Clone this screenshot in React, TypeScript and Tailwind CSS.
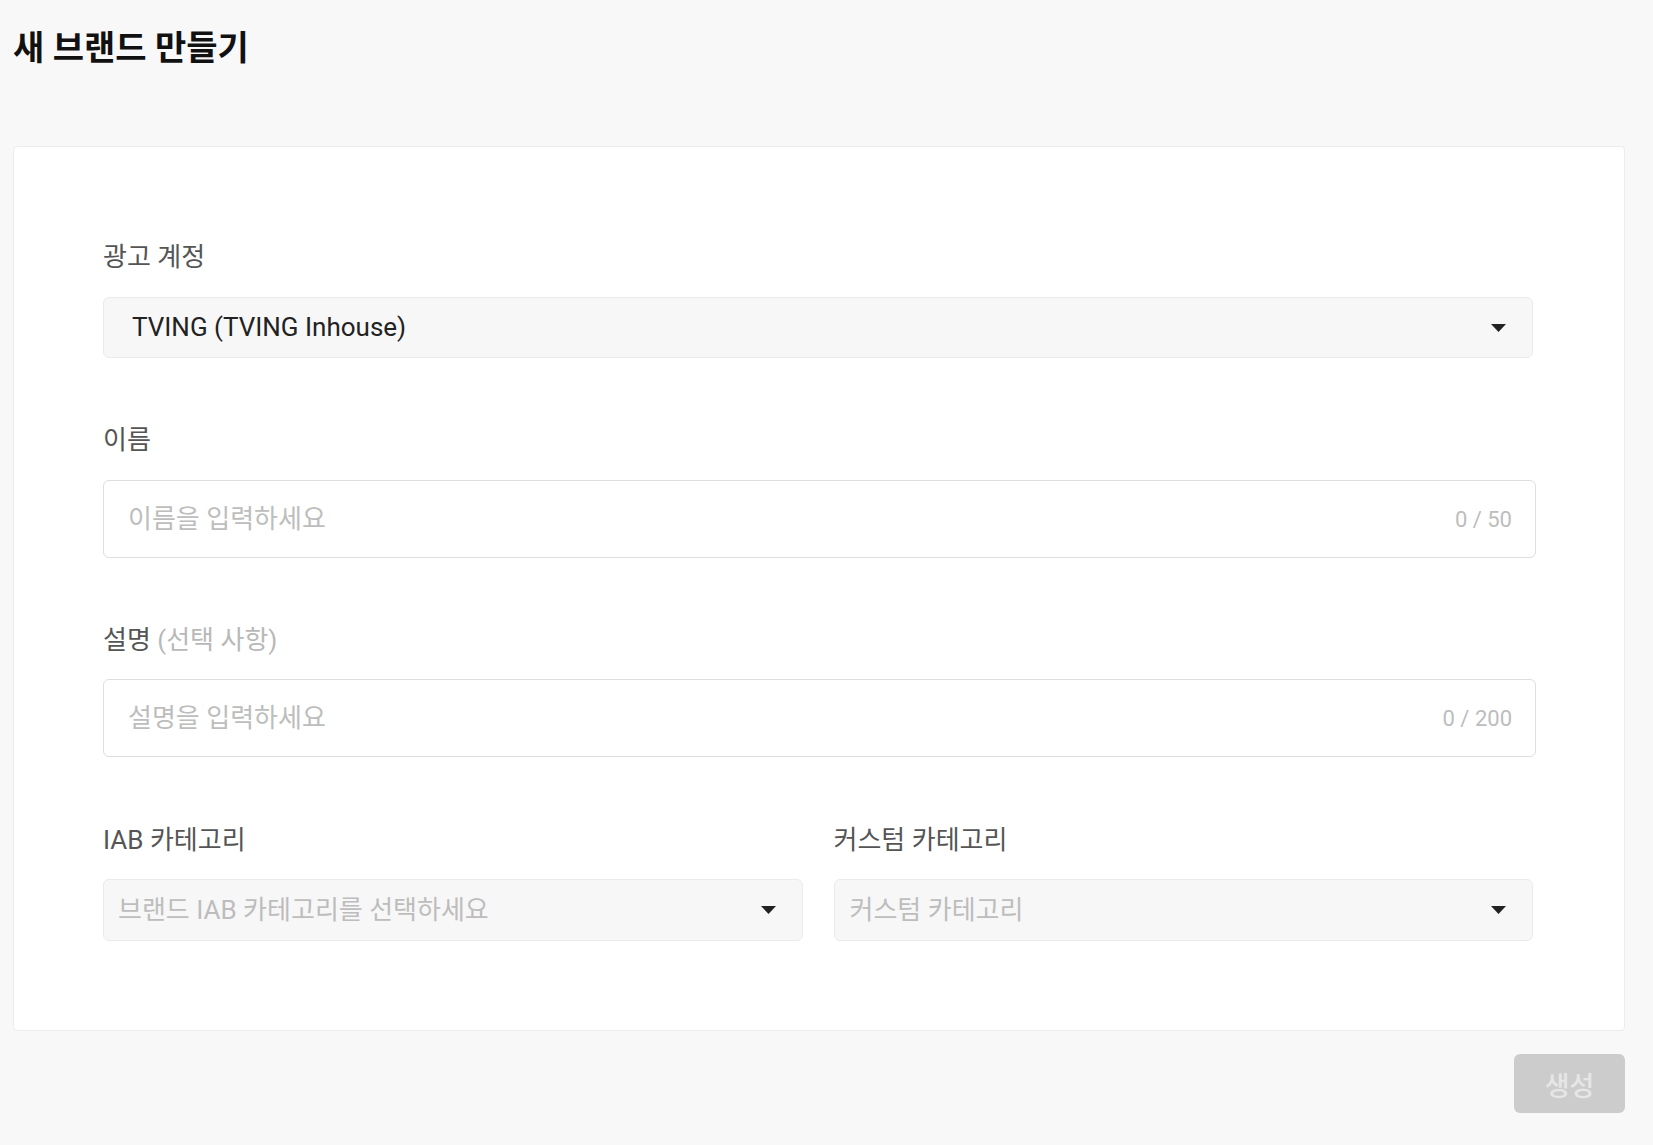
import { useState } from 'react'

function Caret() {
  return (
    <svg width="15" height="8" viewBox="0 0 15 8" className="shrink-0">
      <path d="M0 0 L15 0 L7.5 8 Z" fill="#222" />
    </svg>
  )
}

function Label({ children }: { children: React.ReactNode }) {
  return <div className="text-[26px] leading-[36px] text-[#555]">{children}</div>
}

export default function App() {
  const [name, setName] = useState('')
  const [desc, setDesc] = useState('')

  return (
    <div
      className="min-h-screen bg-[#f8f8f8] pl-[13px] pr-[28px] pt-[24px] pb-[32px]"
      style={{ fontFamily: "Roboto, 'Noto Sans CJK KR', sans-serif" }}
    >
      <h1 className="text-[34px] leading-[48px] font-bold text-[#111]">새 브랜드 만들기</h1>

      <div className="mt-[74px] bg-white border border-[#ececec] rounded-[4px] pl-[89px] pr-[88px] pt-[92px] pb-[89px]">
        <Label>광고 계정</Label>
        <div className="mt-[22px] mr-[3px] h-[61px] flex items-center justify-between bg-[#f7f7f7] border border-[#ebebeb] rounded-[6px] pl-[28px] pr-[26px]">
          <span className="text-[26px] text-[#222]">TVING (TVING Inhouse)</span>
          <Caret />
        </div>

        <div className="mt-[64px]">
          <Label>이름</Label>
        </div>
        <div className="mt-[22px] h-[78px] flex items-center bg-white border border-[#dedede] rounded-[6px] pl-[24px] pr-[23px]">
          <input
            value={name}
            onChange={e => setName(e.target.value.slice(0, 50))}
            placeholder="이름을 입력하세요"
            className="flex-1 bg-transparent outline-none text-[26px] text-[#222] placeholder:text-[#bdbdbd]"
          />
          <span className="text-[22px] text-[#bdbdbd]">{name.length} / 50</span>
        </div>

        <div className="mt-[64px]">
          <Label>
            설명 <span className="text-[#b8b8b8]">(선택 사항)</span>
          </Label>
        </div>
        <div className="mt-[21px] h-[78px] flex items-center bg-white border border-[#dedede] rounded-[6px] pl-[24px] pr-[23px]">
          <input
            value={desc}
            onChange={e => setDesc(e.target.value.slice(0, 200))}
            placeholder="설명을 입력하세요"
            className="flex-1 bg-transparent outline-none text-[26px] text-[#222] placeholder:text-[#bdbdbd]"
          />
          <span className="text-[22px] text-[#bdbdbd]">{desc.length} / 200</span>
        </div>

        <div className="mt-[65px] mr-[3px] grid grid-cols-2 gap-x-[31px]">
          <div>
            <Label>IAB 카테고리</Label>
            <div className="mt-[21px] h-[62px] flex items-center justify-between bg-[#f7f7f7] border border-[#ebebeb] rounded-[6px] pl-[14px] pr-[26px]">
              <span className="text-[26px] text-[#bdbdbd]">브랜드 IAB 카테고리를 선택하세요</span>
              <Caret />
            </div>
          </div>
          <div>
            <Label>커스텀 카테고리</Label>
            <div className="mt-[21px] h-[62px] flex items-center justify-between bg-[#f7f7f7] border border-[#ebebeb] rounded-[6px] pl-[15px] pr-[26px]">
              <span className="text-[26px] text-[#bdbdbd]">커스텀 카테고리</span>
              <Caret />
            </div>
          </div>
        </div>
      </div>

      <div className="mt-[23px] flex justify-end">
        <button
          disabled
          className="w-[111px] h-[59px] pt-[7px] rounded-[6px] bg-[#cccccc] text-[27px] font-medium text-[#e6e6e6]"
        >
          생성
        </button>
      </div>
    </div>
  )
}
